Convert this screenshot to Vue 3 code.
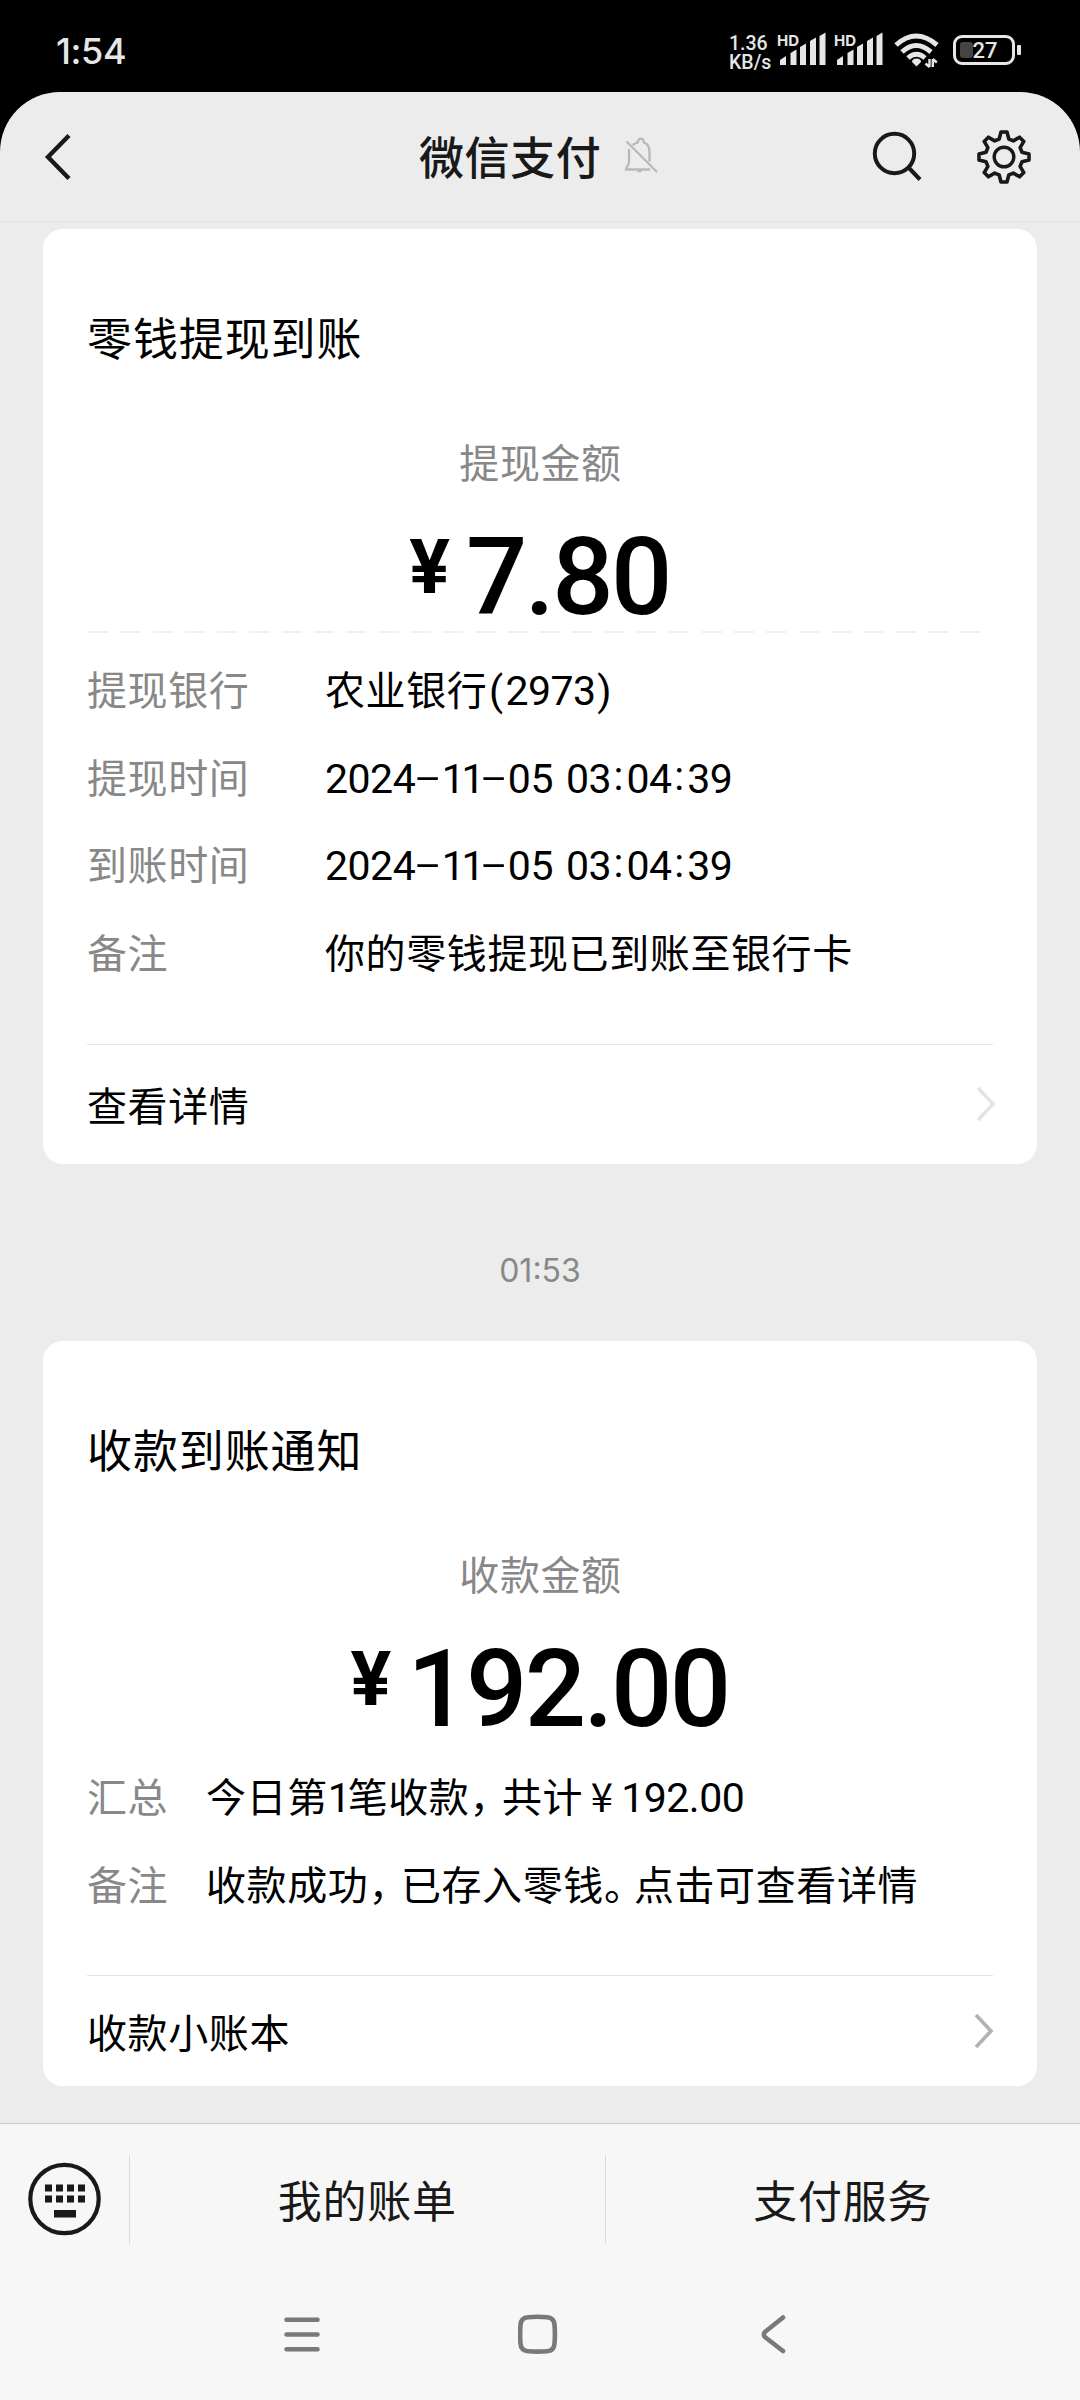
<script setup>
const cards = [
  {
    id: 'withdraw',
    title: '零钱提现到账',
    label: '提现金额',
    amount: '7.80',
    dashed: true,
    rows: [
      { name: '提现银行', value: '农业银行(2973)' },
      { name: '提现时间', value: '2024-11-05 03:04:39' },
      { name: '到账时间', value: '2024-11-05 03:04:39' },
      { name: '备注', value: '你的零钱提现已到账至银行卡' },
    ],
    link: '查看详情',
  },
  {
    id: 'receive',
    title: '收款到账通知',
    label: '收款金额',
    amount: '192.00',
    dashed: false,
    rows: [
      { name: '汇总', value: '今日第1笔收款，共计¥192.00' },
      { name: '备注', value: '收款成功，已存入零钱。点击可查看详情' },
    ],
    link: '收款小账本',
  },
]

const kinds = { '-': 'dash', ':': 'colon', '，': 'comma', '。': 'stop', '¥': 'yen', '(': 'paren', ')': 'paren', ' ': 'space', '.': 'num' }

// Splits a value into runs so that digits and punctuation get their own spacing
function runs(text) {
  return text.match(/11|1(?=笔)|\d+|[-:，。¥(). ]|[^\d\-:，。¥(). ]+/g).map((t) => {
    if (t === '11' || t === '1') return { t, kind: 'ones' }
    if (/^\d+$/.test(t)) return { t, kind: 'num' }
    return { t, kind: kinds[t] || 'han' }
  })
}

// Eight-toothed gear outline around the origin
const gear = (() => {
  const tooth = [[-4.8, -18], [-3, -25], [3, -25], [4.8, -18]]
  const pts = []
  for (let i = 0; i < 8; i++) {
    const a = (i * Math.PI) / 4
    for (const [x, y] of tooth) {
      pts.push(`${(x * Math.cos(a) - y * Math.sin(a)).toFixed(2)},${(x * Math.sin(a) + y * Math.cos(a)).toFixed(2)}`)
    }
  }
  return pts.join(' ')
})()
</script>

<template>
  <div class="screen">
    <div class="status">
      <span class="clock">1:54</span>
      <div class="indicators">
        <div class="speed"><span>1.36</span><span>KB/s</span></div>
        <div v-for="n in 2" :key="n" class="signal">
          <span class="hd">HD</span>
          <svg width="50" height="34" viewBox="0 0 50 34" fill="#e6e6e6">
            <path d="M2 28l6-4v9H2zM12.500 21l6-3.500V33h-6zM22 15l6-3.500V33h-6zM32 9l6-3.500V33h-6zM41.500 4l6-3.500V33h-6z" />
          </svg>
        </div>
        <svg class="wifi" width="46" height="36" viewBox="0 0 46 36" fill="none" stroke="#e6e6e6" stroke-width="5">
          <path d="M2 12Q22-6 43 12M8 19Q22 6 37 19M14 25Q22.500 17.500 31 25" />
          <path d="M22.500 25.500c3 0 4.500 1.500 4.500 3.500l-4.500 4.500-4.500-4.500c0-2 1.500-3.500 4.500-3.500z" fill="#e6e6e6" stroke="none" />
          <path d="M35.500 26v8M31.500 30.500l4 3.500M38.800 34v-8M38.800 26l4 3.500" stroke-width="2.400" />
        </svg>
        <div class="battery"><i></i><span>27</span><b></b></div>
      </div>
    </div>

    <div class="app">
      <header class="header">
        <svg class="back" width="30" height="50" viewBox="0 0 30 50" fill="none" stroke="#191919" stroke-width="4.400">
          <path d="M25 3.500L4 25l21 21.500" />
        </svg>
        <div class="heading">
          <h1>微信支付</h1>
          <svg width="34" height="38" viewBox="0 0 34 38" fill="none" stroke="#b9b9b9" stroke-width="2.300">
            <path d="M8.500 9c2-1.500 4-2.300 5.300-2.700 0-5 6-5 6 0 4 1.500 5.700 5 5.700 9.200v10M5 13v13c0 3.500-3 5-3 7.500h24M13.500 35h4M2.500 5.500L33 36" />
          </svg>
        </div>
        <div class="tools">
          <svg width="52" height="52" viewBox="0 0 52 52" fill="none" stroke="#191919" stroke-width="4">
            <circle cx="23.500" cy="23.500" r="19.700" /><path d="M37.500 37.500l11.500 12" />
          </svg>
          <svg width="56" height="56" viewBox="-28 -28 56 56" fill="none" stroke="#191919" stroke-width="3.600" stroke-linejoin="round">
            <polygon :points="gear" /><circle r="9.800" stroke-width="3.400" />
          </svg>
        </div>
      </header>

      <main class="feed">
        <template v-for="card in cards" :key="card.id">
          <time v-if="card.id === 'receive'" class="stamp">01:53</time>
          <section class="card" :class="card.id">
            <h2>{{ card.title }}</h2>
            <div class="label">{{ card.label }}</div>
            <div class="amount"><span class="sign">¥</span><span class="figure">{{ card.amount }}</span></div>
            <div class="rule" :class="{ dashed: card.dashed }"></div>
            <dl>
              <div v-for="row in card.rows" :key="row.name" class="row">
                <dt>{{ row.name }}</dt>
                <dd><span v-for="(r, i) in runs(row.value)" :key="i" :class="r.kind">{{ r.t }}</span></dd>
              </div>
            </dl>
            <div class="link">
              <span>{{ card.link }}</span>
              <svg width="22" height="38" viewBox="0 0 22 38" fill="none" stroke-width="3.600">
                <path d="M3 3l15 16L3 35" />
              </svg>
            </div>
          </section>
        </template>
      </main>

      <footer class="menu">
        <div class="keyboard">
          <svg width="74" height="74" viewBox="0 0 74 74">
            <circle cx="36.500" cy="37" r="34.200" fill="none" stroke="#191919" stroke-width="4.200" />
            <path fill="#191919" d="M17 22.500h7v7h-7zM28 22.500h7v7h-7zM39 22.500h7v7h-7zM50 22.500h7v7h-7zM17 33.500h7v7h-7zM28 33.500h7v7h-7zM39 33.500h7v7h-7zM50 33.500h7v7h-7zM26 48h22v7.500H26z" />
          </svg>
        </div>
        <div class="tab">我的账单</div>
        <div class="tab">支付服务</div>
      </footer>

      <nav class="system">
        <svg width="40" height="44" viewBox="0 0 40 44"><path d="M4.500 6.700h31M4.500 21.500h31M4.500 36.200h31" /></svg>
        <svg width="40" height="44" viewBox="0 0 40 44"><path d="M10 4.200q9.500-.8 19 0 7 .5 7.500 7.500.8 9.500 0 19-.5 7-7.500 7.500-9.500.8-19 0-7-.5-7.500-7.500-.8-9.500 0-19 .5-7 7.500-7.500z" /></svg>
        <svg width="40" height="44" viewBox="0 0 40 44"><path d="M29 4.500L11.500 18.500q-3.500 3 0 6L29 38" /></svg>
      </nav>
    </div>
  </div>
</template>

<style>
body { margin: 0; background: #000; }
</style>

<style scoped>
.screen {
  width: 1080px;
  height: 2400px;
  overflow: hidden;
  background: #000;
  color: #000;
  font-family: "Noto Sans CJK SC", sans-serif;
  display: flex;
  flex-direction: column;
}
.status {
  height: 92px;
  box-sizing: border-box;
  padding: 0 59px 0 56px;
  display: flex;
  justify-content: space-between;
  color: #e6e6e6;
  font-family: Inter, sans-serif;
}
.clock { font-size: 36px; font-weight: 500; line-height: 102px; letter-spacing: -0.4px; }
.indicators { display: flex; align-items: flex-start; }
.speed {
  width: 48px;
  margin-top: 35px;
  display: flex;
  flex-direction: column;
  font: 500 19.500px/18.500px Roboto, sans-serif;
}
.signal { position: relative; width: 57px; height: 66px; display: flex; align-items: flex-end; }
.signal svg { margin-left: 1px; }
.hd { position: absolute; left: 0; top: 33px; font: 700 15px/16px Inter, sans-serif; }
.wifi { margin: 33px 0 0 3px; }
.battery {
  position: relative;
  box-sizing: border-box;
  width: 62px;
  height: 30px;
  margin: 35px 6px 0 13px;
  border: 3px solid #e6e6e6;
  border-radius: 9px;
}
.battery i { position: absolute; left: 4px; top: 4px; width: 13px; height: 16px; border-radius: 3px; background: #444; }
.battery span { position: absolute; left: 0; width: 56px; text-align: center; padding-left: 1px; font: 500 22px/25px Roboto, sans-serif; }
.battery b { position: absolute; right: -9px; top: 7px; width: 4px; height: 10px; border-radius: 1px; background: #e6e6e6; }

.app {
  flex: 1;
  display: flex;
  flex-direction: column;
  background: #ececec;
  border-radius: 60px 60px 0 0;
  overflow: hidden;
}
.header {
  height: 130px;
  box-sizing: border-box;
  border-bottom: 1px solid #e2e2e2;
  display: grid;
  grid-template-columns: 419px 1fr 250px;
}
.back { margin: 40px 0 0 44px; }
.heading { display: flex; }
h1 { margin: 0; font-size: 45px; font-weight: 500; line-height: 128px; letter-spacing: 0.6px; color: #191919; }
.heading svg { margin: 44px 0 0 23px; }
.tools { display: flex; gap: 53px; padding: 38px 0 0 41px; }
.tools svg:last-child { margin-top: -1.500px; }

.feed { flex: 1; padding: 7px 43px 0; display: flex; flex-direction: column; }
.card {
  box-sizing: border-box;
  background: #fff;
  border-radius: 20px;
  padding: 76px 44px 0;
}
.withdraw { height: 935px; }
.receive { height: 745px; }
.stamp { display: block; height: 177px; text-align: center; font: 400 32px/214px Inter, sans-serif; color: #888; letter-spacing: 0; }
h2 { margin: 0; font-size: 45px; font-weight: 400; line-height: 64px; letter-spacing: 0.9px; }
.label { margin-top: 60px; text-align: center; color: #888; font-size: 40px; line-height: 64px; letter-spacing: 0.6px; text-indent: 1px; }
.amount { height: 138px; display: flex; justify-content: center; font-family: Roboto, sans-serif; font-weight: 500; }
.sign { font-size: 76px; font-weight: 700; line-height: 149px; margin: 0 16px 0 -1px; }
.figure { font-size: 108px; line-height: 169px; letter-spacing: -2.600px; }
.rule { height: 3px; margin-left: 1px; }
.dashed { background: repeating-linear-gradient(90deg, #f0f0f0 0 20px, #fff 20px 32.300px); height: 2px; margin-bottom: 1px; }
dl { margin: 13px 0 0; }
.row { display: flex; height: 87.500px; font-size: 40px; line-height: 85px; white-space: nowrap; letter-spacing: 0.6px; }
dt { width: 238px; color: #888; }
dd { margin: 0; display: flex; }
.receive dt { width: 119px; }
.receive dl { margin-top: 7px; }
.num, .ones, .colon, .paren { font-family: Roboto, sans-serif; font-size: 41px; line-height: 90px; }
.num { letter-spacing: -0.500px; }
.ones { letter-spacing: -3.200px; }
.dash { width: 26.500px; text-align: center; transform: translateY(-3px) scaleX(2); }
.colon { width: 15.500px; text-align: center; line-height: 84px; }
.paren { width: 18px; text-align: center; }
.space { width: 13px; }
.comma { width: 32.500px; font-feature-settings: "halt" 1; }
.stop { width: 30px; font-feature-settings: "halt" 1; }
.yen { width: 38px; text-align: center; }
.link {
  display: flex;
  justify-content: space-between;
  align-items: center;
  border-top: 1px solid #e5e5e5;
  font-size: 40px;
  line-height: 60px;
  letter-spacing: 0.6px;
}
.link span { margin-top: -2px; }
.withdraw .link { margin-top: 48px; height: 119px; }
.receive .link { margin-top: 47px; height: 111px; }
.link svg { stroke: #e4e4e4; margin: -1px -4px 0 0; }
.receive .link svg { stroke: #b2b2b2; margin-right: -2px; }

.menu {
  height: 151px;
  box-sizing: border-box;
  background: #f7f7f7;
  border-top: 1px solid #c9c9c9;
  display: flex;
  align-items: center;
}
.keyboard { width: 129px; height: 88px; display: flex; align-items: center; padding-left: 28px; box-sizing: border-box; }
.tab {
  flex: 1;
  height: 89px;
  border-left: 1px solid #dcdcdc;
  text-align: center;
  font-size: 44px;
  line-height: 88px;
  letter-spacing: 0.8px;
  color: #191919;
}
.system {
  height: 126px;
  background: #f7f7f7;
  display: flex;
  gap: 196px;
  padding: 39px 0 0 282px;
  box-sizing: border-box;
}
.system svg { fill: none; stroke: #797979; stroke-width: 4.600; stroke-linecap: round; stroke-linejoin: round; }
</style>
